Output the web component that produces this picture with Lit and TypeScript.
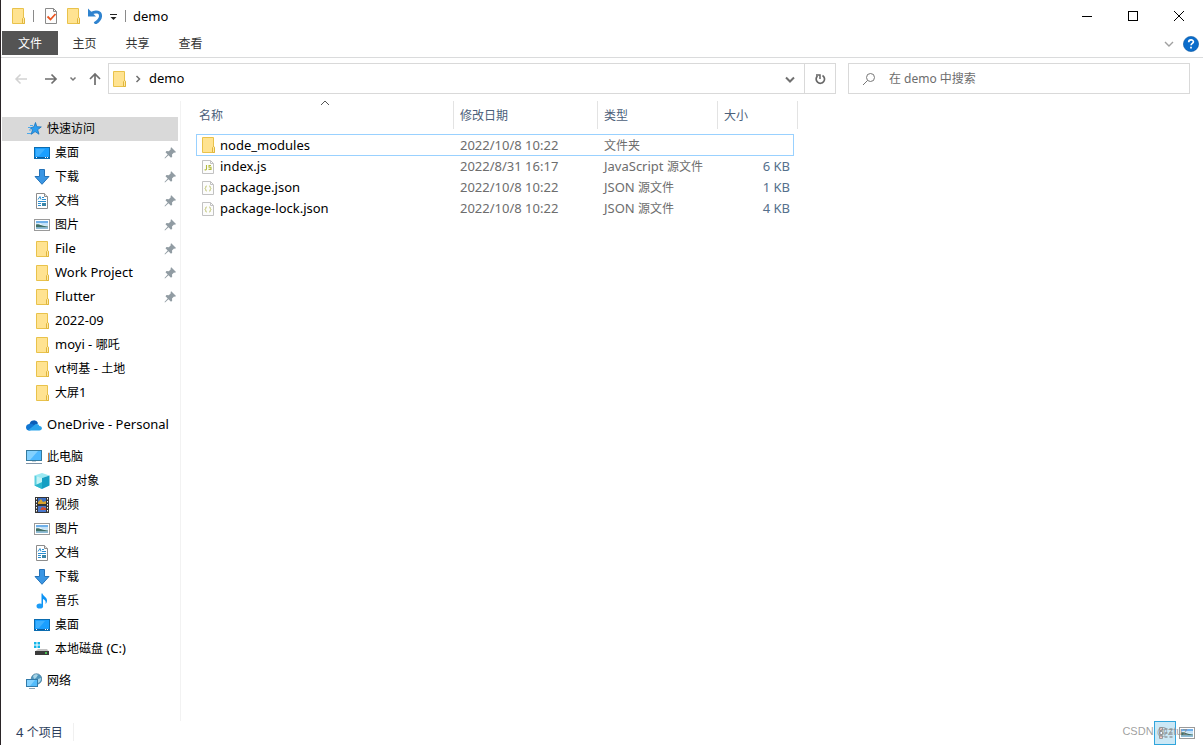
import { LitElement, html, svg, css, nothing } from "lit";
import { customElement, property } from "lit/decorators.js";

const CJK = /([\u3400-\u9fff]+)/;

/** Latin runs use the base size; Chinese runs are set one step smaller. */
const mixed = (text: string) =>
  text.split(CJK).map((part) => (CJK.test(part) ? html`<span class="cjk">${part}</span>` : part));

const textStyles = css`
  :host {
    font-family: "Noto Sans", "Open Sans", "Noto Sans CJK SC", sans-serif;
    font-size: 13px;
    line-height: 20px;
  }
  .cjk {
    font-family: "Noto Sans CJK SC", sans-serif;
    font-size: 12px;
    line-height: 16px;
  }
`;

const picture = svg`
  <rect x="0.5" y="2.5" width="15" height="11" fill="#fff" stroke="#9a9a9a"/>
  <rect x="2" y="4" width="12" height="8" fill="#c3e2f8"/>
  <rect x="2" y="4" width="12" height="2" fill="#6fb0ea"/>
  <path d="M2 7c3-1 5-1 6 1l6 1v1H2z" fill="#eaf5fc"/>
  <path d="M2 7.500c3-1 6 2 12 2v1H2z" fill="#3f6f66"/>
  <rect x="2" y="10.500" width="12" height="1.500" fill="#8dbcd8"/>`;

const glyphs: Record<string, unknown> = {
  folder: svg`
    <path d="M2.500.5h11v9.500h1v5.500h-12z" fill="#ffe391" stroke="#e9c24b"/>
    <path d="M12.500 15.500V10.500l1-1 1 1v5z" fill="#ffe9a6" stroke="#e0b63c"/>`,
  star: svg`
    <path d="M9.500 1.500l1.300 4.200 4.500.2-3.600 2.800 1.300 4.500-3.900-2.600-3.900 2.700 1.300-4.600-2.200-1.700 3.700-1.300z" fill="#2a9df0" stroke="#1873bd" stroke-width=".8"/>
    <path d="M4 4.500h3M2 6.500h3M3 9h2M1 12.500h4" stroke="#4aa9ec" stroke-width="1"/>`,
  desktop: svg`
    <rect x="0.5" y="2.500" width="15" height="11" fill="#1a9fff" stroke="#0b6cb0"/>
    <path d="M2 4h9L5 11H2z" fill="#3db0ff"/>
    <path d="M1 12.500h14" stroke="#0a5c9e"/><path d="M2 12.500h1M11 12.500h1M13 12.500h1" stroke="#fff"/>`,
  down: svg`<path d="M5.500.5h5v7h4.500L8 15.300 1 7.500h4.500z" fill="#3a96e4" stroke="#2472b8"/>`,
  doc: svg`
    <path d="M2.500.5h8l3 3v12h-11z" fill="#fff" stroke="#8c8c8c"/>
    <path d="M10.500.5v3h3" fill="#e6e6e6" stroke="#8c8c8c"/>
    <path d="M4 6.500l2-3 1 3M8 4.500h2M8 6.500h4M4 8.500h8M4 10.500h3M4 12.500h3" fill="none" stroke="#2b8ed0"/>
    <rect x="8" y="10" width="4" height="3" fill="#3b86a8"/>`,
  picture,
  cloud: svg`
    <path d="M3.500 7A4.500 4.500 0 0 1 12 6l-3 5H1z" fill="#0a5db8"/>
    <path d="M0 10.500A3.400 3.400 0 0 1 4 7c2-.5 3 .3 8 4L3.500 13.500A3.300 3.300 0 0 1 0 10.500z" fill="#1277d3"/>
    <path d="M2 13.200 8 8.500c1.500-2.300 4.800-1.800 5.300.4 3.800.4 3.200 4.600 0 4.600H3.500z" fill="#29a3ec"/>`,
  pc: svg`
    <rect x="0.5" y="1.500" width="15" height="10" fill="#4db8ff" stroke="#357a9e"/>
    <path d="M1 2h11L4 11H1z" fill="#83d1ff"/>
    <path d="M6 12h4v1H6z" fill="#c6d2da"/><path d="M0 14.500h16" stroke="#7d92a6"/>`,
  cube: svg`
    <path d="M8 0l7.500 2.500L8 5 .5 2.500z" fill="#9be9f2"/>
    <path d="M.5 2.500 8 5v11L.5 12.500z" fill="#59cfe0"/>
    <path d="M15.500 2.500 8 5v11l7.500-3.500z" fill="#159fc3"/>
    <path d="M.5 12.500 8 9v7z" fill="#2bb6cd"/><path d="M2.500 3.200v8.300L8 9V5z" fill="#c3f3f6"/>`,
  video: svg`
    <rect x="1" y="0" width="14" height="16" fill="#353535"/>
    <path d="M2.500 1v14M13.500 1v14" stroke="#fff" stroke-dasharray="1.500 1.500"/>
    <rect x="4" y="1" width="8" height="6" fill="#3c6fc4"/><rect x="4" y="9" width="8" height="6" fill="#4a78cd"/>
    <path d="M4 5l3-3 2 3 3-1v3H4z" fill="#d8a22c"/><path d="M6 13l2-3 4 1v2z" fill="#d04c32"/>`,
  music: svg`
    <path d="M7.500.5h1c.5 3 4.500 3.500 4.500 7 0 1.500-.5 2.500-1.500 3.500.7-3-.5-4-2.500-5v7.500h-1.500z" fill="#0c93f5"/>
    <ellipse cx="5.800" cy="13" rx="3.300" ry="2.600" fill="#1c9cf7"/>`,
  drive: svg`
    <path d="M0 1h2.500v2.500H0zM3.500 1H6v2.500H3.500zM0 4.500h2.500V7H0zM3.500 4.500H6V7H3.500z" fill="#12b5e8"/>
    <path d="M4 8h9l2 2.500H1z" fill="#c2c2c2"/><rect x="1" y="10" width="14" height="4" fill="#3b3b3b"/>
    <path d="M11 12h2" stroke="#4bea58" stroke-width="1.500"/>`,
  network: svg`
    <circle cx="10.500" cy="6" r="5.300" fill="#4f96bd" stroke="#396f91" stroke-width=".6"/>
    <path d="M7 3c2-2 4-2 5-1l-2 3-2 1zM12 6l3-1c0 3-1 4-3 5z" fill="#a8d5e7"/>
    <rect x="0.500" y="6.500" width="11" height="7" fill="#53bcfb" stroke="#317aa9"/>
    <path d="M1 7h8l-5 6H1z" fill="#84d2ff"/><path d="M3 15.500h6" stroke="#8ba4b5"/>`,
  js: svg`
    <path d="M2.500 1.500h8l3 3v10h-11z" fill="#fcfcfc" stroke="#c2c2c2"/><path d="M10.500 1.500v3h3" fill="none" stroke="#c2c2c2"/>
    <path d="M6.500 6v4q0 1-2 .8M11 6.500H9v1.700h2v2.200H8.500" fill="none" stroke="#b3ba3d" stroke-width="1.100"/>`,
  json: svg`
    <path d="M2.500 1.500h8l3 3v10h-11z" fill="#fcfcfc" stroke="#c2c2c2"/><path d="M10.500 1.500v3h3" fill="none" stroke="#c2c2c2"/>
    <path d="M6.700 6q-1.200 0-1 1.500l-.6 1 .6 1q-.2 1.500 1 1.500M9.300 6q1.200 0 1 1.500l.6 1-.6 1q.2 1.500-1 1.500" fill="none" stroke="#b9bf62"/>`,
  pin: svg`<path d="M10 3 14 7l-1 .8-1-.3-2 2 .2 2.300-1.200 1L6.500 10.300 3 13.500l-.5-.5L5.700 9.600 3.500 7.300l1-1.200 2.300.2 2-2-.2-1.300.7-.7z" fill="#919ca3"/>`,
  props: svg`
    <path d="M2.500.5h8l3 3v12h-11z" fill="#fdfdfd" stroke="#8a8a8a"/><path d="M10.500.5v3h3" fill="none" stroke="#8a8a8a"/>
    <path d="M4.500 8.500l3 3 5-5.500" fill="none" stroke="#ea5420" stroke-width="1.800"/>`,
  undo: svg`
    <path d="M4 5.500c5-3 10-1.500 9.500 3-.3 3-2.500 5-6 7" fill="none" stroke="#2f83cf" stroke-width="3"/>
    <path d="M1 .5v8h8z" fill="#2f83cf"/>`,
  more: svg`<path d="M4 6.500h7" stroke="#222"/><path d="M4.500 9h6L7.500 12z" fill="#222"/>`,
  minimize: svg`<path d="M3 8.500h10" stroke="#000"/>`,
  maximize: svg`<rect x="3.500" y="3.500" width="9" height="9" fill="none" stroke="#000"/>`,
  close: svg`<path d="M3 3l10 10M13 3 3 13" stroke="#000"/>`,
  help: svg`
    <circle cx="8" cy="8" r="7.600" fill="#0a6ccb" stroke="#0a559f" stroke-width=".6"/>
    <path d="M5.700 6.200c0-3 4.700-3 4.700-.4 0 1.700-2.300 1.500-2.300 3.500M8 10.700v1.800" fill="none" stroke="#fff" stroke-width="1.700"/>`,
  back: svg`<path d="M14 8H3M7.500 3.500 3 8l4.500 4.500" fill="none" stroke="#d2d2d2" stroke-width="1.500"/>`,
  forward: svg`<path d="M2 8h11M8.500 3.500 13 8l-4.500 4.500" fill="none" stroke="#6e6e6e" stroke-width="1.700"/>`,
  up: svg`<path d="M8 14V3M3 8 8 3l5 5" fill="none" stroke="#6e6e6e" stroke-width="1.700"/>`,
  chevronSmall: svg`<path d="M5.500 6.500 8 9l2.500-2.500" fill="none" stroke="#777" stroke-width="1.500"/>`,
  chevronDown: svg`<path d="M4 6.500 8 10.500l4-4" fill="none" stroke="#707070" stroke-width="2"/>`,
  chevronLight: svg`<path d="M4 6 8 10l4-4" fill="none" stroke="#a0a0a0" stroke-width="1.400"/>`,
  chevronRight: svg`<path d="M6.500 5 9.500 8l-3 3" fill="none" stroke="#707070" stroke-width="1.500"/>`,
  sort: svg`<path d="M4 10 8 6l4 4" fill="none" stroke="#555"/>`,
  refresh: svg`
    <path d="M10.500 4.500A4.200 4.200 0 1 1 5.500 5" fill="none" stroke="#666" stroke-width="1.700"/>
    <path d="M4 4h4v4" fill="none" stroke="#666" stroke-width="1.500"/>`,
  search: svg`<circle cx="9.500" cy="6.500" r="4" fill="none" stroke="#777"/><path d="M6.500 9.500 2 14" stroke="#777"/>`,
  details: svg`
    <path d="M2.500 2.500h3v3h-3zM2.500 6.500h3v3h-3zM2.500 10.500h3v3h-3z" fill="#fff" stroke="#9b9b9b"/><path d="M3.500 4h1M3.500 12h1" stroke="#d33"/>
    <path d="M7.500 4h3M12.500 4h3M7.500 8h3M12.500 8h3M7.500 12h3M12.500 12h3" stroke="#777"/>`,
};

@customElement("fx-icon")
class FxIcon extends LitElement {
  @property() name = "";

  static styles = css`
    :host {
      display: inline-flex;
      flex: none;
      width: 16px;
      height: 16px;
    }
    .glyph {
      display: block;
      width: 16px;
      height: 16px;
    }
  `;

  render() {
    return html`<svg class="glyph" viewBox="0 0 16 16" aria-hidden="true">${glyphs[this.name]}</svg>`;
  }
}

interface NavEntry {
  icon: string;
  label: string;
  pinned?: boolean;
}
interface NavGroup extends NavEntry {
  selected?: boolean;
  children: NavEntry[];
}

const groups: NavGroup[] = [
  {
    icon: "star",
    label: "快速访问",
    selected: true,
    children: [
      { icon: "desktop", label: "桌面", pinned: true },
      { icon: "down", label: "下载", pinned: true },
      { icon: "doc", label: "文档", pinned: true },
      { icon: "picture", label: "图片", pinned: true },
      { icon: "folder", label: "File", pinned: true },
      { icon: "folder", label: "Work Project", pinned: true },
      { icon: "folder", label: "Flutter", pinned: true },
      { icon: "folder", label: "2022-09" },
      { icon: "folder", label: "moyi - 哪吒" },
      { icon: "folder", label: "vt柯基 - 土地" },
      { icon: "folder", label: "大屏1" },
    ],
  },
  { icon: "cloud", label: "OneDrive - Personal", children: [] },
  {
    icon: "pc",
    label: "此电脑",
    children: [
      { icon: "cube", label: "3D 对象" },
      { icon: "video", label: "视频" },
      { icon: "picture", label: "图片" },
      { icon: "doc", label: "文档" },
      { icon: "down", label: "下载" },
      { icon: "music", label: "音乐" },
      { icon: "desktop", label: "桌面" },
      { icon: "drive", label: "本地磁盘 (C:)" },
    ],
  },
  { icon: "network", label: "网络", children: [] },
];

@customElement("nav-pane")
class NavPane extends LitElement {
  static styles = [
    textStyles,
    css`
      :host {
        display: block;
        padding: 16px 2px 0 1px;
        border-right: 1px solid #f2f2f2;
      }
      .group {
        margin-bottom: 8px;
      }
      .row {
        display: flex;
        align-items: center;
        gap: 5px;
        height: 24px;
        padding: 0 0 0 24px;
        color: #000;
        text-decoration: none;
        white-space: nowrap;
      }
      .row.child {
        padding-left: 32px;
      }
      .row.selected {
        background: #d9d9d9;
      }
      .label {
        flex: 1;
        padding-bottom: 2px;
      }
    `,
  ];

  private row(entry: NavEntry, kind: string) {
    return html`<a class="row ${kind}" href="#">
      <fx-icon name=${entry.icon}></fx-icon>
      <span class="label">${mixed(entry.label)}</span>
      ${entry.pinned ? html`<fx-icon name="pin"></fx-icon>` : nothing}
    </a>`;
  }

  render() {
    return html`<nav aria-label="导航窗格">
      ${groups.map(
        (g) => html`<div class="group">
          ${this.row(g, g.selected ? "selected" : "")} ${g.children.map((c) => this.row(c, "child"))}
        </div>`
      )}
    </nav>`;
  }
}

const files = [
  { icon: "folder", name: "node_modules", date: "2022/10/8 10:22", type: "文件夹", size: "", focused: true },
  { icon: "js", name: "index.js", date: "2022/8/31 16:17", type: "JavaScript 源文件", size: "6 KB" },
  { icon: "json", name: "package.json", date: "2022/10/8 10:22", type: "JSON 源文件", size: "1 KB" },
  { icon: "json", name: "package-lock.json", date: "2022/10/8 10:22", type: "JSON 源文件", size: "4 KB" },
];

@customElement("file-list")
class FileList extends LitElement {
  static styles = [
    textStyles,
    css`
      :host {
        display: block;
        padding-left: 15px;
      }
      .files {
        border-collapse: separate;
        border-spacing: 0;
        table-layout: fixed;
        width: 598px;
      }
      .name { width: 258px; }
      .date { width: 144px; }
      .type { width: 120px; }
      .size { width: 76px; }
      th {
        height: 33px;
        padding: 0;
        font-weight: 400;
        text-align: left;
        vertical-align: top;
        position: relative;
      }
      .head {
        display: flex;
        align-items: center;
        width: 100%;
        height: 28px;
        padding: 0 0 0 6px;
        border: 0;
        border-right: 1px solid #e3e3e3;
        background: none;
        color: #4c607a;
        font: inherit;
      }
      .first .head {
        padding-left: 3px;
      }
      .last .head {
        width: 80px;
      }
      .sort {
        position: absolute;
        top: -6px;
        left: 50%;
        transform: translateX(-50%);
      }
      td {
        box-sizing: border-box;
        height: 21px;
        padding: 0 0 0 6px;
        line-height: 19px;
        color: #6d6d6d;
        white-space: nowrap;
      }
      td:first-child {
        padding-left: 4px;
        color: #000;
      }
      td:last-child {
        padding-right: 4px;
        text-align: right;
        color: #55708c;
      }
      .focused td {
        height: 22px;
        border-top: 1px solid #99d1ff;
        border-bottom: 1px solid #99d1ff;
      }
      .focused td:first-child {
        padding-left: 3px;
        border-left: 1px solid #99d1ff;
      }
      .focused td:last-child {
        border-right: 1px solid #99d1ff;
      }
      .file {
        display: flex;
        align-items: center;
        gap: 4px;
      }
    `,
  ];

  render() {
    return html`<table class="files">
      <colgroup><col class="name" /><col class="date" /><col class="type" /><col class="size" /></colgroup>
      <thead>
        <tr>
          <th class="first" aria-sort="ascending">
            <button class="head">${mixed("名称")}</button><fx-icon class="sort" name="sort"></fx-icon>
          </th>
          <th><button class="head">${mixed("修改日期")}</button></th>
          <th><button class="head">${mixed("类型")}</button></th>
          <th class="last"><button class="head">${mixed("大小")}</button></th>
        </tr>
      </thead>
      <tbody>
        ${files.map(
          (f) => html`<tr class=${f.focused ? "focused" : ""}>
            <td><span class="file"><fx-icon name=${f.icon}></fx-icon>${f.name}</span></td>
            <td>${f.date}</td>
            <td>${mixed(f.type)}</td>
            <td>${f.size}</td>
          </tr>`
        )}
      </tbody>
    </table>`;
  }
}

@customElement("app-root")
class AppRoot extends LitElement {
  static styles = [
    textStyles,
    css`
      :host {
        display: flex;
        flex-direction: column;
        box-sizing: border-box;
        min-height: 100vh;
        border-left: 1px solid #2a2427;
        background: #fff;
        color: #000;
      }
      button {
        display: inline-flex;
        align-items: center;
        justify-content: center;
        padding: 0;
        border: 0;
        background: none;
        color: inherit;
        font: inherit;
      }
      .title {
        display: flex;
        align-items: center;
        height: 31px;
        padding: 0 1px 0 9px;
      }
      .quick {
        display: flex;
        align-items: center;
        gap: 6px;
      }
      .bar {
        width: 1px;
        height: 12px;
        background: #8a8a8a;
      }
      .bar.lead {
        margin: 0 3px 0 1px;
      }
      .more {
        margin: 0 3px;
      }
      .caption {
        flex: 1;
        margin: 0 0 0 7px;
        font-size: 13px;
        font-weight: 400;
      }
      .controls button {
        width: 46px;
        height: 30px;
      }
      .controls {
        display: flex;
      }
      .ribbon {
        display: flex;
        align-items: center;
        height: 26px;
        padding: 0 4px 0 1px;
        border-bottom: 1px solid #dadbdc;
      }
      .tabs {
        display: flex;
        flex: 1;
        align-self: flex-start;
      }
      .tab {
        width: 53px;
        height: 24px;
        color: #333;
      }
      .tab.file {
        width: 56px;
        background: #545454;
        color: #fff;
      }
      .tail {
        display: flex;
        gap: 6px;
      }
      .address {
        display: flex;
        align-items: center;
        padding: 5px 13px 5px 12px;
      }
      .history {
        display: flex;
        align-items: center;
        gap: 6px;
        width: 95px;
      }
      .next {
        margin-left: 8px;
      }
      .box {
        display: flex;
        align-items: center;
        box-sizing: border-box;
        height: 31px;
        border: 1px solid #d9d9d9;
      }
      .path {
        flex: 1;
        padding-left: 2px;
      }
      .crumbs {
        display: flex;
        align-items: center;
        flex: 1;
        gap: 3px;
      }
      .crumb {
        padding-bottom: 2px;
      }
      .drop {
        width: 28px;
      }
      .path .refresh {
        width: 31px;
        height: 29px;
        border-left: 1px solid #d9d9d9;
      }
      .search {
        flex: 0 1 342px;
        gap: 12px;
        margin-left: 12px;
        padding-left: 12px;
      }
      .query {
        flex: 1;
        min-width: 0;
        border: 0;
        padding: 0;
        outline: 0;
        font-family: inherit;
        font-size: 12px;
      }
      .query::placeholder {
        color: #6d6d6d;
        opacity: 1;
      }
      .body {
        display: grid;
        grid-template-columns: 180px 1fr;
        flex: 1;
        padding-top: 2px;
      }
      .status {
        display: flex;
        align-items: center;
        height: 24px;
        padding: 0 8px 0 15px;
        color: #2c3e5c;
        position: relative;
      }
      .count {
        flex: 1;
        padding-bottom: 2px;
      }
      .count-text {
        padding-right: 10px;
        border-right: 1px solid #f0f0f0;
      }
      .views {
        display: flex;
        gap: 3px;
      }
      .view {
        width: 16px;
        height: 24px;
      }
      .view.on {
        box-sizing: border-box;
        width: 22px;
        border: 1px solid #30a5dc;
        background: #cbe8f6;
      }
      .watermark {
        position: absolute;
        right: 15px;
        top: 0;
        font-family: "Liberation Sans", sans-serif;
        font-size: 11px;
        color: #8a8a8ad0;
        pointer-events: none;
      }
    `,
  ];

  private iconButton(icon: string, label: string, cls = "") {
    return html`<button class=${cls} aria-label=${label}><fx-icon name=${icon}></fx-icon></button>`;
  }

  render() {
    return html`
      <header class="title">
        <div class="quick">
          <fx-icon name="folder"></fx-icon><span class="bar lead"></span>
          ${this.iconButton("props", "属性")} ${this.iconButton("folder", "新建文件夹")}
          ${this.iconButton("undo", "撤消")}
        </div>
        ${this.iconButton("more", "自定义快速访问工具栏", "more")}
        <span class="bar"></span>
        <h1 class="caption">demo</h1>
        <div class="controls">
          ${this.iconButton("minimize", "最小化")} ${this.iconButton("maximize", "最大化")}
          ${this.iconButton("close", "关闭")}
        </div>
      </header>
      <div class="ribbon">
        <div class="tabs">
          <button class="tab file">${mixed("文件")}</button>
          ${["主页", "共享", "查看"].map((t) => html`<button class="tab">${mixed(t)}</button>`)}
        </div>
        <div class="tail">${this.iconButton("chevronLight", "展开功能区")} ${this.iconButton("help", "帮助")}</div>
      </div>
      <div class="address">
        <div class="history">
          ${this.iconButton("back", "后退")} ${this.iconButton("forward", "前进", "next")}
          ${this.iconButton("chevronSmall", "最近浏览的位置")} ${this.iconButton("up", "上移")}
        </div>
        <div class="box path">
          <div class="crumbs">
            <fx-icon name="folder"></fx-icon><fx-icon name="chevronRight"></fx-icon>
            <button class="crumb">demo</button>
          </div>
          ${this.iconButton("chevronDown", "以前的位置", "drop")} ${this.iconButton("refresh", "刷新", "refresh")}
        </div>
        <label class="box search">
          <fx-icon name="search"></fx-icon>
          <input class="query" type="text" placeholder="在 demo 中搜索" aria-label="搜索" />
        </label>
      </div>
      <main class="body">
        <nav-pane></nav-pane>
        <file-list></file-list>
      </main>
      <footer class="status">
        <div class="count"><span class="count-text">${mixed("4 个项目")}</span></div>
        <div class="views">
          ${this.iconButton("details", "详细信息", "view on")} ${this.iconButton("picture", "大图标", "view")}
        </div>
        <span class="watermark">CSDN @ztuz</span>
      </footer>
    `;
  }
}
